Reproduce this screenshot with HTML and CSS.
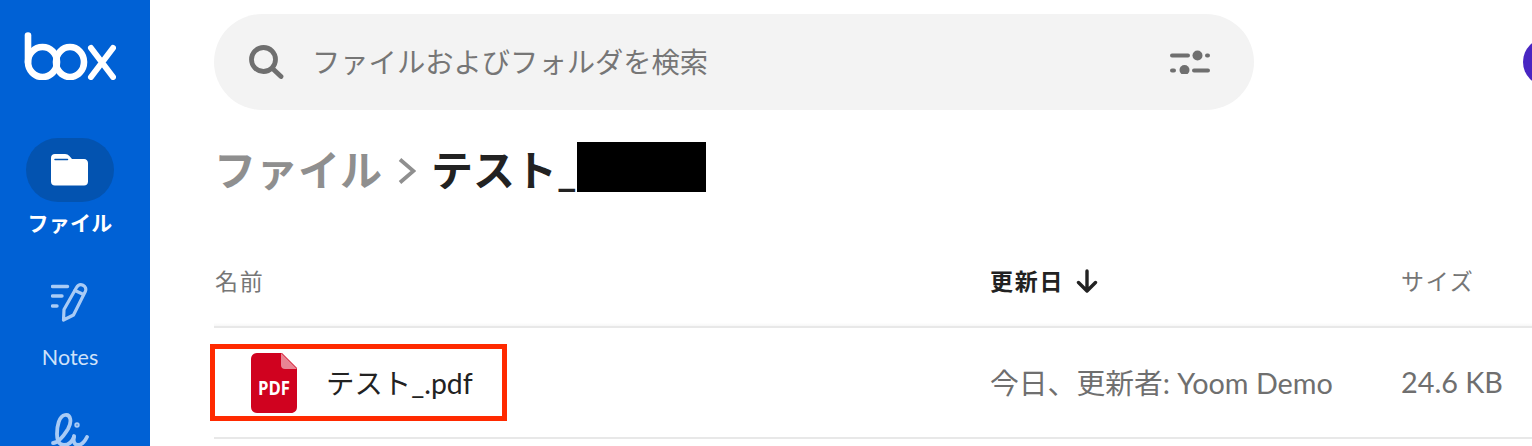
FILE: index.html
```html
<!DOCTYPE html>
<html lang="ja">
<head>
<meta charset="utf-8">
<title>Box</title>
<link rel="stylesheet" href="styles.css">
</head>
<body>
<div class="app">
  <nav class="sidebar">
    <svg class="logo" width="92" height="48" viewBox="0 0 92 48" fill="none" stroke="#fff" stroke-width="6.600" stroke-linecap="round" stroke-linejoin="round">
      <path d="M4 3.500V30"/>
      <ellipse cx="18.500" cy="30" rx="14.500" ry="15"/>
      <ellipse cx="46" cy="30" rx="14" ry="15"/>
      <path d="M67 16L89 45M89 16L67 45" stroke-width="6"/>
    </svg>
    <div class="nav-pill">
      <svg width="38" height="32" viewBox="0 0 38 32">
        <path fill="#fff" d="M4 0h10c2 0 3.200.8 4.400 2l2.600 3h12c2.500 0 4 1.700 4 4v18.500c0 2.500-1.500 4-4 4H4c-2.500 0-4-1.500-4-4V4c0-2.500 1.500-4 4-4z"/>
        <path fill="none" stroke="#0353b0" stroke-width="1.500" stroke-linecap="round" d="M4 5.500h12.500"/>
      </svg>
    </div>
    <div class="nav-label active">ファイル</div>
    <svg class="notes-icon" width="38" height="40" viewBox="0 0 38 40" fill="none" stroke="#a9cbf5" stroke-width="3.200" stroke-linecap="round" stroke-linejoin="round">
      <path d="M1.500 4.500h15M1.500 14h9.500M1.500 24h4.500" stroke-width="3.400"/>
      <path d="M25.500 5.500c1.500-2.500 4-3.500 6.500-2.300s3.400 3.800 2.300 6.300L22.500 33 12.500 38l.5-10.500z"/>
      <path d="M24 8.500l8.500 4"/>
    </svg>
    <div class="nav-label notes">Notes</div>
    <svg class="sign-icon" width="38" height="34" viewBox="0 0 38 34" fill="none" stroke="#a9cbf5" stroke-width="3.800" stroke-linecap="round" stroke-linejoin="round">
      <path d="M2 31C7 31 12 25 17 17 21 10 20 2 14 3 8 4 6 14 6 22c0 8 3 11 7 11 5 0 8-3 10-8"/>
      <path d="M23 24c-1 5 0 9 4 9 4 0 7-4 9-8"/>
      <circle cx="26" cy="13" r="1" stroke-width="3.400"/>
    </svg>
  </nav>
  <main class="main">
    <header class="topbar">
      <div class="search">
        <svg class="search-icon" width="36" height="36" viewBox="0 0 36 36" fill="none" stroke="#6f6f6f" stroke-width="4.800" stroke-linecap="round">
          <circle cx="15.500" cy="15.500" r="12"/>
          <path d="M24.500 24.500L33 32.500"/>
        </svg>
        <span class="search-text">ファイルおよびフォルダを検索</span>
        <svg class="filter-icon" width="40" height="24" viewBox="0 0 40 24" fill="#6f6f6f">
          <rect x="0" y="3.500" width="20" height="4" rx="2"/>
          <circle cx="27.500" cy="5.500" r="5"/>
          <rect x="35" y="3.500" width="5" height="4" rx="2"/>
          <rect x="0" y="18.500" width="6" height="4" rx="2"/>
          <circle cx="14.500" cy="20" r="5"/>
          <rect x="22" y="18.500" width="18" height="4" rx="2"/>
        </svg>
      </div>
    </header>
    <span class="avatar"></span>
    <h1 class="crumbs">
      <span class="crumb-parent">ファイル</span>
      <svg class="crumb-sep" width="18" height="28" viewBox="0 0 18 28" fill="none" stroke="#8f8f8f" stroke-width="3.800"><path d="M2 2.500L15.500 14 2 25.500"/></svg>
      <span class="crumb-current">テスト_</span><span class="redacted"></span>
    </h1>
    <section class="table">
      <div class="row head">
        <div class="col-name">名前</div>
        <div class="col-date sorted">更新日
          <svg width="24" height="24" viewBox="0 0 24 24" fill="none" stroke="#222" stroke-width="3.400" stroke-linecap="round" stroke-linejoin="round"><path d="M12 2V21.500M3.500 13.500l8.500 8.500 8.500-8.500"/></svg>
        </div>
        <div class="col-size">サイズ</div>
      </div>
      <div class="row item">
        <div class="col-name file">
          <svg class="pdf" width="46" height="60" viewBox="0 0 46 60">
            <path fill="#d0021f" d="M6 0h25l15 15v39c0 3.500-2.500 6-6 6H6c-3.500 0-6-2.500-6-6V6c0-3.500 2.500-6 6-6z"/>
            <path fill="#e98593" d="M30 0l16 16H34c-2.500 0-4-1.500-4-4z"/>
            <text x="7" y="42" textLength="32" lengthAdjust="spacingAndGlyphs" class="pdf-text">PDF</text>
          </svg>
          <span class="file-name">テスト_.pdf</span>
        </div>
        <div class="col-date">今日、更新者: Yoom Demo</div>
        <div class="col-size">24.6 KB</div>
      </div>
    </section>
    <div class="highlight"></div>
  </main>
</div>
</body>
</html>
```
FILE: styles.css
```css
* { box-sizing: border-box; }
html, body { margin: 0; height: 446px; overflow: hidden; background: #fff; }
body { font-family: Lato, "Noto Sans CJK JP", sans-serif; color: #222; }
.app { display: flex; height: 446px; overflow: hidden; }

.sidebar {
  width: 150px; flex: none; background: #0061d5;
  display: flex; flex-direction: column; align-items: center;
  padding: 32px 10px 0 0;
}
.logo { display: block; flex: none; }
.nav-pill {
  width: 88px; height: 64px; margin-top: 58px; border-radius: 32px; flex: none;
  background: #0353b0; display: flex; align-items: center; justify-content: center;
}
.nav-label { font-size: 21.500px; line-height: 28px; color: #cfe1f9; flex: none; }
.nav-label.active { color: #fff; font-weight: 700; font-size: 21px; margin-top: 7px; letter-spacing: .3px; }
.nav-label.notes { margin-top: 21px; }
.notes-icon { margin-top: 45px; flex: none; }
.sign-icon { margin-top: 41px; flex: none; }

.main { position: relative; flex: 1; min-width: 0; padding: 14px 0 0 64px; }
.topbar { display: flex; }
.search {
  width: 1040px; height: 96px; border-radius: 48px; background: #f3f3f3;
  display: flex; align-items: center; padding: 0 44px 0 34px;
}
.search-text { font-size: 28.300px; color: #767676; margin-left: 28px; flex: 1; padding-bottom: 4px; }
.avatar {
  position: absolute; left: 1373px; top: 38px; width: 48px; height: 48px;
  border-radius: 50%; background: #4826c2;
}
.crumbs {
  display: flex; align-items: center; margin: 32px 0 0; height: 50px;
  font-size: 42px; font-weight: 700; line-height: 50px;
}
.crumb-parent { color: #8f8f8f; margin-top: 6px; }
.crumb-sep { margin: 8px 15px 0 16px; }
.crumb-current { color: #222; margin-top: 6px; }
.redacted { width: 129px; height: 50px; background: #000; }

.table { margin-top: 54px; }
.row { display: flex; width: 1400px; border-bottom: 2px solid #e8e8e8; }
.head { height: 82px; padding-top: 20px; font-size: 23px; color: #767676; letter-spacing: 1.700px; background: linear-gradient(#fff 96%, #f7f7f7); }
.head .col-name, .head .col-date, .head .col-size { line-height: 30px; }
.head .col-name { padding-left: 1px; }
.sorted { color: #222; font-weight: 700; display: flex; align-items: center; gap: 11px; height: 30px; }
.item { height: 111px; align-items: center; font-size: 28.800px; color: #6f6f6f; }
.item .col-date, .item .col-size, .file-name { padding-bottom: 2px; }
.col-name { width: 776px; }
.col-date { width: 411px; }
.col-size { flex: none; }
.file { display: flex; align-items: center; padding-left: 37px; }
.file-name { color: #222; margin-left: 29px; font-size: 28.400px; }
.pdf-text { font-family: "Open Sans", sans-serif; font-weight: 700; font-size: 19.500px; fill: #fff; }
.highlight {
  position: absolute; left: 60px; top: 344px; width: 297px; height: 77px;
  border: 5px solid #ff2a00;
}
```
